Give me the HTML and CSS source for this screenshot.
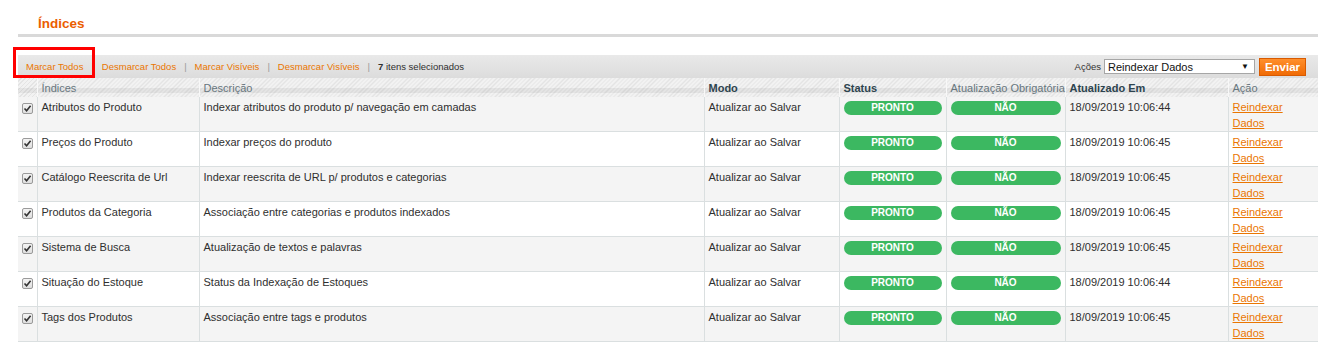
FILE: index.html
```html
<!DOCTYPE html>
<html lang="pt-BR">
<head>
    <meta charset="UTF-8">
    <title>Índices</title>
    <link rel="stylesheet" href="styles.css">
</head>
<body>
    <div class="page">
        <div class="content-header">
            <h3>Índices</h3>
        </div>

        <div class="grid">
            <div class="massaction">
                <div class="mass-links">
                    <a href="#">Marcar Todos</a>
                    <span class="sep">|</span>
                    <a href="#">Desmarcar Todos</a>
                    <span class="sep">|</span>
                    <a href="#">Marcar Visíveis</a>
                    <span class="sep">|</span>
                    <a href="#">Desmarcar Visíveis</a>
                    <span class="sep">|</span>
                    <span class="count"><strong>7</strong> itens selecionados</span>
                </div>
                <div class="mass-form">
                    <label>Ações</label>
                    <div class="select">Reindexar Dados<span class="arrow">&#9660;</span></div>
                    <button type="button">Enviar</button>
                </div>
            </div>

            <table class="data">
                <colgroup>
                    <col style="width:19px">
                    <col style="width:162px">
                    <col style="width:505px">
                    <col style="width:135px">
                    <col style="width:107px">
                    <col style="width:119px">
                    <col style="width:163px">
                    <col style="width:90px">
                </colgroup>
                <thead>
                    <tr>
                        <th></th>
                        <th>Índices</th>
                        <th>Descrição</th>
                        <th class="sort">Modo</th>
                        <th class="sort">Status</th>
                        <th>Atualização Obrigatória</th>
                        <th class="sort">Atualizado Em</th>
                        <th>Ação</th>
                    </tr>
                </thead>
                <tbody>
                    <tr>
                        <td class="check"><span class="cb"><svg width="9" height="9" viewBox="0 0 9 9"><path d="M1.5 4.5 L3.6 6.8 L7.6 1.8" fill="none" stroke="#333" stroke-width="1.6"/></svg></span></td>
                        <td>Atributos do Produto</td>
                        <td>Indexar atributos do produto p/ navegação em camadas</td>
                        <td>Atualizar ao Salvar</td>
                        <td><span class="pill">PRONTO</span></td>
                        <td><span class="pill">NÃO</span></td>
                        <td>18/09/2019 10:06:44</td>
                        <td><a href="#">Reindexar Dados</a></td>
                    </tr>
                    <tr>
                        <td class="check"><span class="cb"><svg width="9" height="9" viewBox="0 0 9 9"><path d="M1.5 4.5 L3.6 6.8 L7.6 1.8" fill="none" stroke="#333" stroke-width="1.6"/></svg></span></td>
                        <td>Preços do Produto</td>
                        <td>Indexar preços do produto</td>
                        <td>Atualizar ao Salvar</td>
                        <td><span class="pill">PRONTO</span></td>
                        <td><span class="pill">NÃO</span></td>
                        <td>18/09/2019 10:06:45</td>
                        <td><a href="#">Reindexar Dados</a></td>
                    </tr>
                    <tr>
                        <td class="check"><span class="cb"><svg width="9" height="9" viewBox="0 0 9 9"><path d="M1.5 4.5 L3.6 6.8 L7.6 1.8" fill="none" stroke="#333" stroke-width="1.6"/></svg></span></td>
                        <td>Catálogo Reescrita de Url</td>
                        <td>Indexar reescrita de URL p/ produtos e categorias</td>
                        <td>Atualizar ao Salvar</td>
                        <td><span class="pill">PRONTO</span></td>
                        <td><span class="pill">NÃO</span></td>
                        <td>18/09/2019 10:06:45</td>
                        <td><a href="#">Reindexar Dados</a></td>
                    </tr>
                    <tr>
                        <td class="check"><span class="cb"><svg width="9" height="9" viewBox="0 0 9 9"><path d="M1.5 4.5 L3.6 6.8 L7.6 1.8" fill="none" stroke="#333" stroke-width="1.6"/></svg></span></td>
                        <td>Produtos da Categoria</td>
                        <td>Associação entre categorias e produtos indexados</td>
                        <td>Atualizar ao Salvar</td>
                        <td><span class="pill">PRONTO</span></td>
                        <td><span class="pill">NÃO</span></td>
                        <td>18/09/2019 10:06:45</td>
                        <td><a href="#">Reindexar Dados</a></td>
                    </tr>
                    <tr>
                        <td class="check"><span class="cb"><svg width="9" height="9" viewBox="0 0 9 9"><path d="M1.5 4.5 L3.6 6.8 L7.6 1.8" fill="none" stroke="#333" stroke-width="1.6"/></svg></span></td>
                        <td>Sistema de Busca</td>
                        <td>Atualização de textos e palavras</td>
                        <td>Atualizar ao Salvar</td>
                        <td><span class="pill">PRONTO</span></td>
                        <td><span class="pill">NÃO</span></td>
                        <td>18/09/2019 10:06:45</td>
                        <td><a href="#">Reindexar Dados</a></td>
                    </tr>
                    <tr>
                        <td class="check"><span class="cb"><svg width="9" height="9" viewBox="0 0 9 9"><path d="M1.5 4.5 L3.6 6.8 L7.6 1.8" fill="none" stroke="#333" stroke-width="1.6"/></svg></span></td>
                        <td>Situação do Estoque</td>
                        <td>Status da Indexação de Estoques</td>
                        <td>Atualizar ao Salvar</td>
                        <td><span class="pill">PRONTO</span></td>
                        <td><span class="pill">NÃO</span></td>
                        <td>18/09/2019 10:06:44</td>
                        <td><a href="#">Reindexar Dados</a></td>
                    </tr>
                    <tr>
                        <td class="check"><span class="cb"><svg width="9" height="9" viewBox="0 0 9 9"><path d="M1.5 4.5 L3.6 6.8 L7.6 1.8" fill="none" stroke="#333" stroke-width="1.6"/></svg></span></td>
                        <td>Tags dos Produtos</td>
                        <td>Associação entre tags e produtos</td>
                        <td>Atualizar ao Salvar</td>
                        <td><span class="pill">PRONTO</span></td>
                        <td><span class="pill">NÃO</span></td>
                        <td>18/09/2019 10:06:45</td>
                        <td><a href="#">Reindexar Dados</a></td>
                    </tr>
                </tbody>
            </table>
        </div>

        <!-- red annotation box over "Marcar Todos" -->
        <div class="highlight"></div>
    </div>
</body>
</html>
```

FILE: styles.css
```css
body {
    margin: 0;
    font-family: "Liberation Sans", Arial, sans-serif;
    font-size: 11px;
    color: #2f2f2f;
    background: #fff;
}

a {
    color: #ea7601;
}

.page {
    position: relative;
    width: 1300px;
    padding: 0 16px 0 18px;
}

.content-header {
    padding: 15px 0 1px;
    border-bottom: 3px solid #d9d9d9;
    margin-bottom: 18px;
}

.content-header h3 {
    margin: 0 0 0 20px;
    font-size: 13.5px;
    line-height: 18px;
    font-weight: bold;
    color: #eb5e00;
}

/* mass action bar */
.massaction {
    display: flex;
    justify-content: space-between;
    align-items: center;
    height: 23px;
    padding: 0 12px 0 8px;
    background: linear-gradient(to bottom, #e9e9e9, #dcdcdc);
    font-size: 9.5px;
}

.mass-links {
    display: flex;
    align-items: center;
}

.mass-links a {
    text-decoration: none;
}

.mass-links .sep {
    color: #9a9a9a;
    margin: 0 8px;
}

.mass-links .count {
    color: #2f2f2f;
}

.mass-form {
    display: flex;
    align-items: center;
}

.mass-form label {
    margin-right: 3px;
    color: #333;
}

.mass-form .select {
    display: flex;
    justify-content: space-between;
    align-items: center;
    box-sizing: border-box;
    width: 151px;
    height: 15px;
    padding: 0 5px 0 3px;
    background: #fff;
    border: 1px solid #a6a6a6;
    font-size: 11px;
    color: #111;
}

.mass-form .arrow {
    font-size: 8px;
    color: #111;
}

.mass-form button {
    box-sizing: border-box;
    width: 47px;
    height: 18px;
    margin-left: 4px;
    padding: 0;
    border: 1px solid #d85a00;
    background: linear-gradient(to bottom, #ff8f2c, #f06b05);
    color: #fff;
    font-family: "Liberation Sans", Arial, sans-serif;
    font-size: 11.5px;
    font-weight: bold;
}

/* grid table */
.data {
    width: 1300px;
    table-layout: fixed;
    border-collapse: collapse;
}

.data th {
    height: 19px;
    box-sizing: border-box;
    padding: 0 4px;
    text-align: left;
    font-weight: normal;
    color: #67767e;
    line-height: 18px;
    white-space: nowrap;
    border-right: 1px solid #f8f8f8;
    background:
        linear-gradient(to bottom, transparent 52%, rgba(0, 0, 0, 0.06) 52%, rgba(0, 0, 0, 0.06) 80%, transparent 80%),
        repeating-linear-gradient(-45deg, #e4e4e4 0 1px, #f2f2f2 1px 3px);
}

.data th.sort {
    font-weight: bold;
    color: #2d444f;
}

.data th:last-child {
    border-right: none;
}

.data td {
    vertical-align: top;
    padding: 2px 4px 0 4px;
    line-height: 16px;
    border-right: 1px solid #dadfe0;
    border-bottom: 1px solid #dadfe0;
}

.data td:last-child {
    border-right: none;
}

.data tbody tr:nth-child(odd) td {
    background: #f4f4f4;
}

.data td.check {
    padding: 6px 0 0 4px;
}

.cb {
    display: block;
    box-sizing: border-box;
    width: 11px;
    height: 11px;
    border: 1px solid #9a9a9a;
    border-radius: 2px;
    background: linear-gradient(to bottom, #f4f4f4, #dedede);
}

.cb svg {
    display: block;
}

.pill {
    display: block;
    height: 14px;
    margin-top: 2px;
    border-radius: 7px;
    background: #3cb861;
    color: #fff;
    font-size: 10px;
    font-weight: bold;
    line-height: 14px;
    text-align: center;
}

.data td a {
    display: block;
    font-size: 11px;
    line-height: 16px;
}

.highlight {
    position: absolute;
    left: 13px;
    top: 47px;
    width: 82px;
    height: 31px;
    box-sizing: border-box;
    border: 3px solid #ff0000;
}
```
